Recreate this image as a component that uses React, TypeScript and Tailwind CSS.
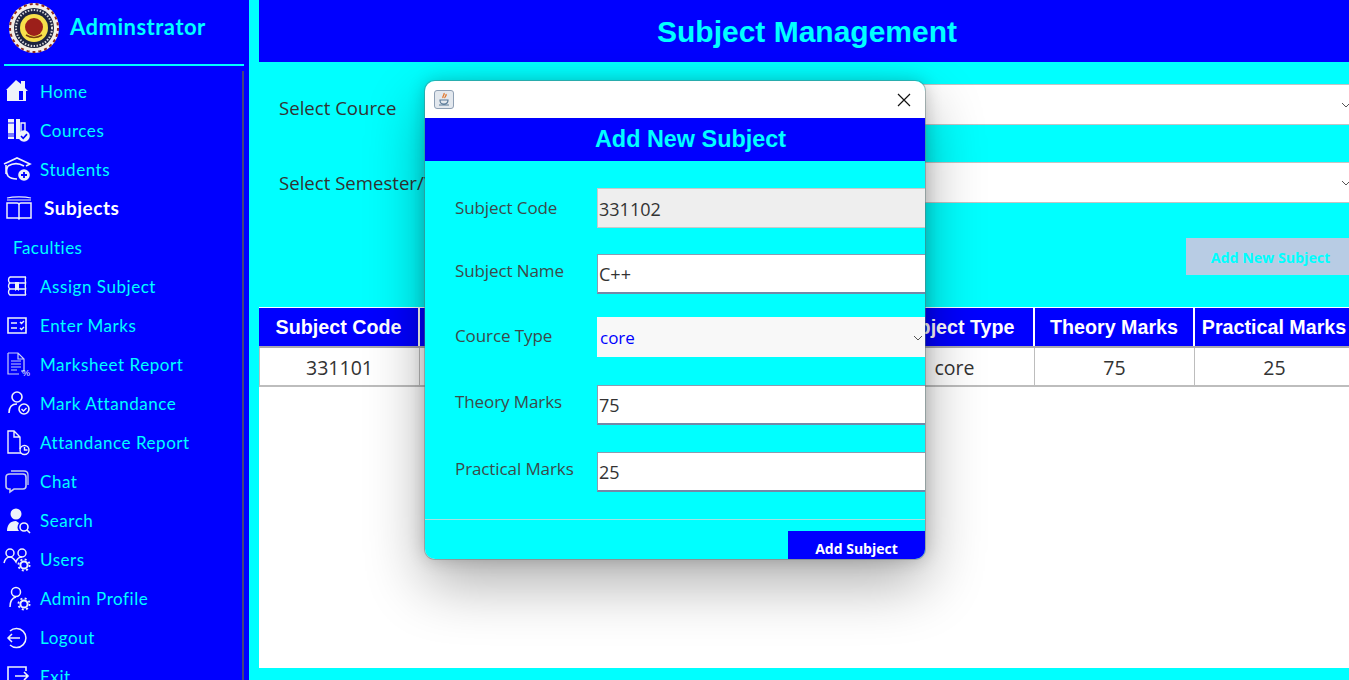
import React from "react";

const ic = { fill: "none", stroke: "#eef2fa", strokeWidth: 1.4 };
const solid = "#eef2fa";

function Badge({ kind, x, y }: { kind: "check" | "plus" | "gear"; x: number; y: number }) {
  if (kind === "gear") {
    return (
      <g>
        <circle cx={x} cy={y} r="3.6" fill="none" stroke={solid} strokeWidth="2" />
        <circle cx={x} cy={y} r="5.6" fill="none" stroke={solid} strokeWidth="1.8" strokeDasharray="2 2.4" />
      </g>
    );
  }
  return (
    <g>
      <circle cx={x} cy={y} r="5.8" fill={solid} />
      {kind === "check" ? (
        <path d={`M${x - 3} ${y}l2.2 2.3 3.8-4.2`} fill="none" stroke="#0000ff" strokeWidth="1.6" />
      ) : (
        <path d={`M${x - 3} ${y}h6M${x} ${y - 3}v6`} fill="none" stroke="#0000ff" strokeWidth="1.8" />
      )}
    </g>
  );
}

const icons: Record<string, React.ReactNode> = {
  home: (
    <g>
      <path d="M6 12L16 2l5 4V3h4v7l3 3h-2v10H7V12z" fill={solid} />
      <path d="M19 13h4v9h-4z" fill="#0000ff" />
    </g>
  ),
  cources: (
    <g>
      <path d="M8 2h6v20H8zM16 2h4v20h-4z" fill={solid} />
      <path d="M21 6h4v10h-4z" {...ic} />
      <path d="M8 6h6M8 17h6M8 19h6" stroke="#0000ff" strokeWidth="1" />
      <Badge kind="check" x={24} y={19} />
    </g>
  ),
  students: (
    <g>
      <path d="M4 8l13-6 13 6-4 2" {...ic} strokeWidth="1.6" />
      <path d="M8 10c5-3 11-3 16 0M8 10c-2 4-2 7 0 10 2 2 6 3 9 3M6 9v9" {...ic} strokeWidth="1.6" />
      <Badge kind="plus" x={24} y={19} />
    </g>
  ),
  subjects: (
    <g>
      <path d="M7 3c6-1.500 18-1.500 24 0M7 5h24" {...ic} strokeWidth="1.1" />
      <path d="M7 8h10c1 0 2 .5 2 2 0-1.500 1-2 2-2h10v15H20l-1 1-1-1H7zM19 10v14" {...ic} strokeWidth="1.5" />
    </g>
  ),
  faculties: null,
  assign: (
    <g>
      <path d="M10 4h16M10 4c-2 1-2 5 0 6h16M26 4c-1 1-1 5 0 6M10 10c-2 1-2 5 0 6h16M26 10c-1 1-1 5 0 6M10 16c-2 1-2 5 0 6h16M26 16c-1 1-1 5 0 6" {...ic} />
      <path d="M15 9h4v9l-2-1.500-2 1.500z" fill={solid} />
    </g>
  ),
  enter: (
    <g>
      <path d="M8 6h18v15H8z" {...ic} strokeWidth="1.6" />
      <path d="M11 11h6M11 16h6M20 10l1.5 1.5 2.5-2.5M20 16l1.5 1.5 2.5-2.5" {...ic} />
    </g>
  ),
  marksheet: (
    <g>
      <path d="M8 2h10l6 6v12h-3M8 2v21h11M18 2v6h6" fill="none" stroke="#c8d0f8" strokeWidth="1.2" />
      <path d="M11 10h10M11 13h10M11 16h10M11 19h6" stroke="#c8d0f8" strokeWidth="1.2" />
      <text x="22" y="25" fontSize="9" fill={solid} fontFamily="Liberation Sans, sans-serif">%</text>
    </g>
  ),
  mark: (
    <g>
      <circle cx="17" cy="7" r="5" {...ic} strokeWidth="1.6" />
      <path d="M9 23c0-6 3-9 8-9" {...ic} strokeWidth="1.6" />
      <circle cx="24" cy="19" r="5" {...ic} strokeWidth="1.6" />
      <path d="M21.5 19l2 2 3-3" {...ic} />
    </g>
  ),
  report: (
    <g>
      <path d="M20 20V8l-6-6H8v22h13M14 2v6h6" {...ic} />
      <circle cx="24.5" cy="21" r="4.5" {...ic} />
      <path d="M24.5 18v3h3" {...ic} />
    </g>
  ),
  chat: (
    <g>
      <path d="M10 6h13c2 0 3 1 3 3v9c0 2-1 3-3 3H14l-4 3v-3H9c-2 0-3-1-3-3V9c0-2 1-3 4-3z" fill="none" stroke="#c4ccf0" strokeWidth="1.6" />
      <path d="M11 3h13c3 0 4 1 4 4v10" fill="none" stroke="#c4ccf0" strokeWidth="1.3" />
    </g>
  ),
  search: (
    <g>
      <circle cx="16" cy="7" r="5.5" fill={solid} />
      <path d="M7 24c0-6 3-10 9-10l3 2c-2 3-2 6 0 8z" fill={solid} />
      <circle cx="24" cy="20" r="4" {...ic} strokeWidth="1.6" />
      <path d="M27 23l3 3" {...ic} strokeWidth="1.6" />
    </g>
  ),
  users: (
    <g>
      <circle cx="10" cy="7" r="4" {...ic} strokeWidth="1.5" />
      <circle cx="22" cy="7" r="4" {...ic} strokeWidth="1.5" />
      <path d="M4 17c1-4 3-6 6-6s4 2 6 5c1-3 3-5 6-5" {...ic} strokeWidth="1.5" />
      <Badge kind="gear" x={24} y={19} />
    </g>
  ),
  admin: (
    <g>
      <circle cx="16" cy="7" r="4.5" {...ic} strokeWidth="1.5" />
      <path d="M10 22c0-5 2-9 6-10" {...ic} strokeWidth="1.5" />
      <Badge kind="gear" x={24} y={19} />
    </g>
  ),
  logout: (
    <g>
      <path d="M10 7a9.500 9.500 0 1 1 0 14" {...ic} strokeWidth="1.5" />
      <path d="M8 14h12M12 10l-4 4 4 4" {...ic} strokeWidth="1.5" />
    </g>
  ),
  exit: (
    <g>
      <path d="M26 8V4H8v18h18" {...ic} strokeWidth="1.6" />
      <path d="M15 13h13M24 9l4 4-4 4" {...ic} strokeWidth="1.6" />
    </g>
  ),
};

const menu = [
  { label: "Home", icon: "home" },
  { label: "Cources", icon: "cources" },
  { label: "Students", icon: "students" },
  { label: "Subjects", icon: "subjects", active: true },
  { label: "Faculties", icon: "faculties" },
  { label: "Assign Subject", icon: "assign" },
  { label: "Enter Marks", icon: "enter" },
  { label: "Marksheet Report", icon: "marksheet" },
  { label: "Mark Attandance", icon: "mark" },
  { label: "Attandance Report", icon: "report" },
  { label: "Chat", icon: "chat" },
  { label: "Search", icon: "search" },
  { label: "Users", icon: "users" },
  { label: "Admin Profile", icon: "admin" },
  { label: "Logout", icon: "logout" },
  { label: "Exit", icon: "exit" },
];

function Logo() {
  return (
    <svg width="50" height="50" viewBox="0 0 50 50" className="shrink-0">
      <circle cx="25" cy="25" r="25" fill="#f4efe6" />
      <circle cx="25" cy="25" r="24" fill="none" stroke="#8a2a20" strokeWidth="2" strokeDasharray="3 3" />
      <circle cx="25" cy="25" r="20" fill="#1d2340" />
      <circle cx="25" cy="25" r="18" fill="none" stroke="#d8d8d8" strokeWidth="2" strokeDasharray="1.500 1.500" />
      <circle cx="25" cy="25" r="14" fill="#f7e04a" />
      <circle cx="25" cy="24" r="9" fill="#9c1f1a" />
      <path d="M17 32c5 3 11 3 16 0" fill="none" stroke="#7a3a10" strokeWidth="1.500" />
    </svg>
  );
}

function Sidebar() {
  return (
    <div className="w-[249px] h-[680px] shrink-0 bg-[#0000ff] overflow-hidden">
      <div className="flex items-center h-[64px] pl-[9px] pb-[8px]">
        <Logo />
        <span className="ml-[11px] -mt-[2px] text-[22px] leading-none font-bold tracking-[0.5px] text-[#00ffff] font-['Lato',sans-serif]">
          Adminstrator
        </span>
      </div>
      <div className="ml-[4px] w-[240px] h-[2px] bg-[#00ffff]" />
      <div className="mt-[5px] w-[244px] h-[620px] border-r-2 border-[#44447a] pt-[1px]">
        {menu.map((m) =>
          m.icon === "faculties" ? (
            <div key={m.label} className="h-[39px] flex items-center pl-[13px] text-[17px] tracking-[0.5px] text-[#00ffff] font-['Lato',sans-serif]">
              {m.label}
            </div>
          ) : (
            <div key={m.label} className="h-[39px] flex items-center font-['Lato',sans-serif]">
              <svg width="34" height="28" viewBox="0 0 34 28" className="shrink-0">
                {icons[m.icon]}
              </svg>
              {m.active ? (
                <span className="ml-[10px] text-[19px] font-bold text-white tracking-[0.5px]">{m.label}</span>
              ) : (
                <span className="ml-[6px] text-[17px] tracking-[0.55px] text-[#00ffff]">{m.label}</span>
              )}
            </div>
          )
        )}
      </div>
    </div>
  );
}

function Chevron({ color = "#555" }: { color?: string }) {
  return (
    <svg width="10" height="6" viewBox="0 0 10 6" className="shrink-0">
      <path d="M1 1l4 4 4-4" fill="none" stroke={color} strokeWidth="1" />
    </svg>
  );
}

function FormRow({ label, className, labelClass }: { label: string; className?: string; labelClass?: string }) {
  return (
    <div className={"flex h-[41px] items-center " + (className || "")}>
      <span className={"w-[180px] pl-[20px] shrink-0 text-[18.6px] whitespace-nowrap text-[#333] font-['Open_Sans',sans-serif] " + (labelClass || "")}>
        {label}
      </span>
      <div className="flex-1 h-full bg-white border-y border-[#c4c4c4] flex items-center justify-end pr-[1px] -mr-[3px]">
        <Chevron />
      </div>
    </div>
  );
}

// the three middle columns sit behind the dialog in the picture
const headers = ["Subject Code", "", "", "", "Subject Type", "Theory Marks", "Practical Marks"];
const cells = ["331101", "", "", "", "core", "75", "25"];
const tableCols = "grid grid-cols-[161px_152px_152px_151px_160px_160px_160px] w-[1096px]";

function Main() {
  return (
    <div className="flex-1 min-w-0 h-[680px] bg-[#00ffff] pl-[10px] overflow-hidden">
      <div className="h-[62px] bg-[#0000ff] flex items-center justify-center pl-[6px] text-[30px] font-bold text-[#00ffff] font-['Liberation_Sans',sans-serif]">
        Subject Management
      </div>
      <FormRow label="Select Cource" className="mt-[22px]" labelClass="mt-[6px]" />
      <FormRow label="Select Semester/Year" className="mt-[37px]" labelClass="mt-[1px]" />
      <div className="mt-[35px] flex justify-end">
        <button className="w-[163px] h-[37px] pt-[2px] pl-[6px] bg-[#b8cce4] text-[14.2px] font-bold text-[#00ffff] font-['Open_Sans',sans-serif]">
          Add New Subject
        </button>
      </div>
      <div className="mt-[32px] h-[361px] bg-white overflow-hidden">
        <div className={tableCols + " h-[41px] bg-[#0000ff] border-t border-white border-b-2 border-b-[#a8a8b0]"}>
          {headers.map((h, i) => (
            <div key={i} className="flex items-center justify-center pt-[1px] border-r-2 border-white text-[19.7px] leading-none font-bold text-white whitespace-nowrap font-['Liberation_Sans',sans-serif]">
              {h}
            </div>
          ))}
        </div>
        <div className={tableCols + " h-[39px] border-b-2 border-[#bdbdbd]"}>
          {cells.map((c, i) => (
            <div key={i} className="flex items-center justify-center pt-[2px] border-r border-[#bdbdbd] first:border-l text-[19.5px] text-[#333] font-['Open_Sans',sans-serif]">
              {c}
            </div>
          ))}
        </div>
      </div>
    </div>
  );
}

function Field({ label, value, className, labelClass, inputClass }: { label: string; value: string; className: string; labelClass: string; inputClass?: string }) {
  return (
    <div className={"flex h-[40px] " + className}>
      <span className={"w-[172px] pl-[30px] shrink-0 text-[17px] leading-[40px] tracking-[-0.1px] text-[#3c4a4a] font-['Open_Sans',sans-serif] " + labelClass}>
        {label}
      </span>
      <div className={"flex-1 flex items-center pl-[1px] pt-[2px] text-[18px] text-[#333] font-['Open_Sans',sans-serif] " + (inputClass || "bg-white border-l border-t border-[#8d9bb0] border-b-2 border-b-[#7488a8]")}>
        {value}
      </div>
    </div>
  );
}

function Dialog() {
  return (
    <div className="absolute left-[425px] top-[81px] w-[500px] h-[478px] rounded-[10px] overflow-hidden bg-[#00ffff]">
      <div className="h-[37px] bg-white flex items-center justify-between pl-[9px] pr-[14px]">
        <div className="w-[20px] h-[19px] rounded-[3px] border border-[#8fa0b4] bg-[#e3e8ee] flex items-center justify-center">
          <svg width="14" height="15" viewBox="0 0 14 15">
            <path d="M7 1c1 2-2 3-1 5M9 2c1 2-2 3-1 4" fill="none" stroke="#e0762a" strokeWidth="1.300" />
            <path d="M3 8h8c0 3-1 4-4 4S3 11 3 8zM2 13h10" fill="none" stroke="#5a7a98" strokeWidth="1.200" />
          </svg>
        </div>
        <svg width="14" height="14" viewBox="0 0 14 14">
          <path d="M1 1l12 12M13 1L1 13" stroke="#111" strokeWidth="1.200" />
        </svg>
      </div>
      <div className="h-[43px] bg-[#0000ff] flex items-center justify-center pl-[31px] text-[23.4px] font-bold text-[#00ffff] font-['Liberation_Sans',sans-serif]">
        Add New Subject
      </div>
      <Field label="Subject Code" value="331102" className="mt-[27px]" labelClass="" inputClass="bg-[#eeeeee] border border-[#c8c8c8] border-r-0" />
      <Field label="Subject Name" value="C++" className="mt-[26px]" labelClass="-mt-[3px]" />
      <div className="mt-[23px] flex h-[40px]">
        <span className="w-[172px] pl-[30px] shrink-0 text-[17px] leading-[40px] tracking-[-0.1px] text-[#3c4a4a] font-['Open_Sans',sans-serif] -mt-[1px]">
          Cource Type
        </span>
        <div className="flex-1 flex items-center justify-between pl-[3px] pr-[2px] pt-[2px] bg-[#f8f8f8] text-[17px] text-[#0000ff] font-['Open_Sans',sans-serif]">
          core
          <Chevron />
        </div>
      </div>
      <Field label="Theory Marks" value="75" className="mt-[28px]" labelClass="-mt-[3px]" />
      <Field label="Practical Marks" value="25" className="mt-[27px]" labelClass="-mt-[3px]" />
      <div className="mt-[27px] h-px bg-[#a8e0e0]" />
      <div className="mt-[11px] flex justify-end">
        <button className="w-[137px] h-[28px] bg-[#0000ff] pt-[6px] text-[14px] font-bold text-white font-['Open_Sans',sans-serif]">
          Add Subject
        </button>
      </div>
    </div>
  );
}

export default function App() {
  return (
    <div className="relative flex w-[1349px] h-[680px] overflow-hidden">
      <Sidebar />
      <Main />
      <div className="absolute left-[425px] top-[81px] w-[500px] h-[478px] rounded-[10px] shadow-[0_0_0_1px_rgba(90,120,120,0.45),0_24px_60px_rgba(0,0,0,0.32),0_0_18px_rgba(0,0,0,0.2)]" />
      <Dialog />
    </div>
  );
}
